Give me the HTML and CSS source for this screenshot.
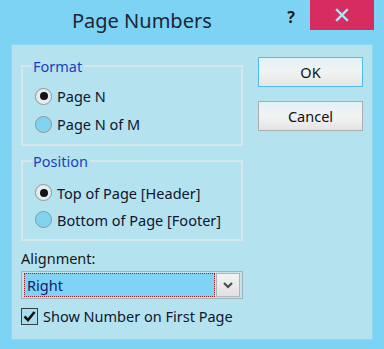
FILE: index.html
```html
<!DOCTYPE html>
<html>
<head>
<meta charset="utf-8">
<link rel="stylesheet" href="styles.css">
</head>
<body>
<div class="window">
  <div class="titlebar">
    <div class="title">Page Numbers</div>
    <div class="help">?</div>
    <div class="close">
      <svg width="14" height="14" viewBox="0 0 14 14"><path d="M2 2 L12 12 M12 2 L2 12" stroke="#a6e9f8" stroke-width="2.4" stroke-linecap="square"/></svg>
    </div>
  </div>
  <div class="panel">
    <div class="left">
      <fieldset class="group group-format">
        <legend>Format</legend>
        <div class="radio-row"><span class="radio checked"><span class="dot"></span></span><span>Page N</span></div>
        <div class="radio-row"><span class="radio"></span><span>Page N of M</span></div>
      </fieldset>
      <fieldset class="group group-position">
        <legend>Position</legend>
        <div class="radio-row"><span class="radio checked"><span class="dot"></span></span><span>Top of Page [Header]</span></div>
        <div class="radio-row"><span class="radio"></span><span>Bottom of Page [Footer]</span></div>
      </fieldset>
      <div class="label">Alignment:</div>
      <div class="select">
        <div class="select-value"><span>Right</span></div>
        <div class="select-btn">
          <svg width="10" height="7" viewBox="0 0 10 7"><path d="M1 1 L5 5 L9 1" fill="none" stroke="#4a4a4a" stroke-width="2.2"/></svg>
        </div>
      </div>
      <div class="check-row">
        <span class="checkbox">
          <svg width="15" height="15" viewBox="0 0 15 15"><path d="M2.5 7.5 L6 11 L12.5 3" fill="none" stroke="#111" stroke-width="2.6"/></svg>
        </span>
        <span>Show Number on First Page</span>
      </div>
    </div>
    <div class="right">
      <div class="btn btn-default">OK</div>
      <div class="btn">Cancel</div>
    </div>
  </div>
</div>
</body>
</html>
```
FILE: styles.css
```css
html, body {
  margin: 0;
  padding: 0;
}
body {
  background: #7dd3f4;
  font-family: "Noto Sans", "Open Sans", sans-serif;
  font-size: 14.5px;
  color: #10142e;
}
.window {
  width: 384px;
  height: 349px;
  background: #7dd3f4;
  overflow: hidden;
}
.titlebar {
  height: 44px;
  display: flex;
  align-items: flex-start;
}
.title {
  padding-left: 72px;
  padding-top: 8px;
  font-size: 20px;
  line-height: 26px;
  color: #1b2636;
  width: 206px;
}
.help {
  padding-top: 6px;
  font-weight: bold;
  font-size: 16px;
  line-height: 22px;
  color: #1a1a1a;
  width: 26px;
  text-align: center;
}
.close {
  margin-left: 6px;
  width: 64px;
  height: 30px;
  background: #d72c5f;
  display: flex;
  align-items: center;
  justify-content: center;
}
.panel {
  margin: 0 11px;
  border: 1px solid #8fd7f0;
  background: #b4e3ef;
  display: flex;
  padding: 11px 9px 0 9px;
  box-sizing: border-box;
  height: 296px;
  gap: 15px;
}
.left {
  width: 222px;
  display: flex;
  flex-direction: column;
}
.group {
  margin: 0;
  border: 2px solid #d7e6e9;
  padding: 6px 0 6px 12px;
  min-width: 0;
}
.group legend {
  padding: 0 2px 0 1px;
  margin-left: -3px;
  line-height: 20px;
  font-size: 14.5px;
  color: #1d3ec4;
}
.group-position {
  margin-top: 5px;
  padding-top: 8px;
}
.radio-row {
  display: flex;
  align-items: center;
  height: 28px;
  gap: 5px;
}
.group-position .radio-row {
  height: 27px;
}
.radio {
  width: 17px;
  height: 17px;
  box-sizing: border-box;
  border-radius: 50%;
  border: 1px solid #8b9598;
  background: #80d4f2;
  display: flex;
  align-items: center;
  justify-content: center;
}
.radio.checked {
  background: #e3ecee;
}
.dot {
  width: 8px;
  height: 8px;
  border-radius: 50%;
  background: #141414;
}
.label {
  margin-top: 8px;
  line-height: 18px;
  color: #161616;
}
.select {
  margin-top: 4px;
  height: 28px;
  box-sizing: border-box;
  border: 1px solid #a3b4b8;
  background: #c5e4ec;
  display: flex;
  align-items: center;
  padding: 1px 2px 1px 2px;
  gap: 1px;
}
.select-value {
  flex: 1;
  height: 24px;
  box-sizing: border-box;
  background: #7fd4f5;
  border: 1px dotted #8e1f2c;
  display: flex;
  align-items: center;
  padding-left: 2px;
  color: #0e1c6e;
}
.select-btn {
  width: 24px;
  height: 24px;
  box-sizing: border-box;
  border: 1px solid #adb6b8;
  background: linear-gradient(#f3f3f3, #e2e2e2);
  display: flex;
  align-items: center;
  justify-content: center;
}
.check-row {
  margin-top: 8px;
  display: flex;
  align-items: center;
  gap: 5px;
  line-height: 18px;
}
.checkbox {
  width: 17px;
  height: 17px;
  box-sizing: border-box;
  border: 1px solid #3a3f42;
  background: #a9dcec;
  display: flex;
  align-items: center;
  justify-content: center;
}
.right {
  width: 105px;
  display: flex;
  flex-direction: column;
  padding-top: 1px;
  gap: 14px;
}
.btn {
  height: 30px;
  box-sizing: border-box;
  border: 1px solid #acacac;
  background: linear-gradient(#e2f1f5, #f1f3f3 50%, #e4e4e4);
  display: flex;
  align-items: center;
  justify-content: center;
  color: #111;
}
.btn-default {
  border-color: #4fbdec;
}
```
